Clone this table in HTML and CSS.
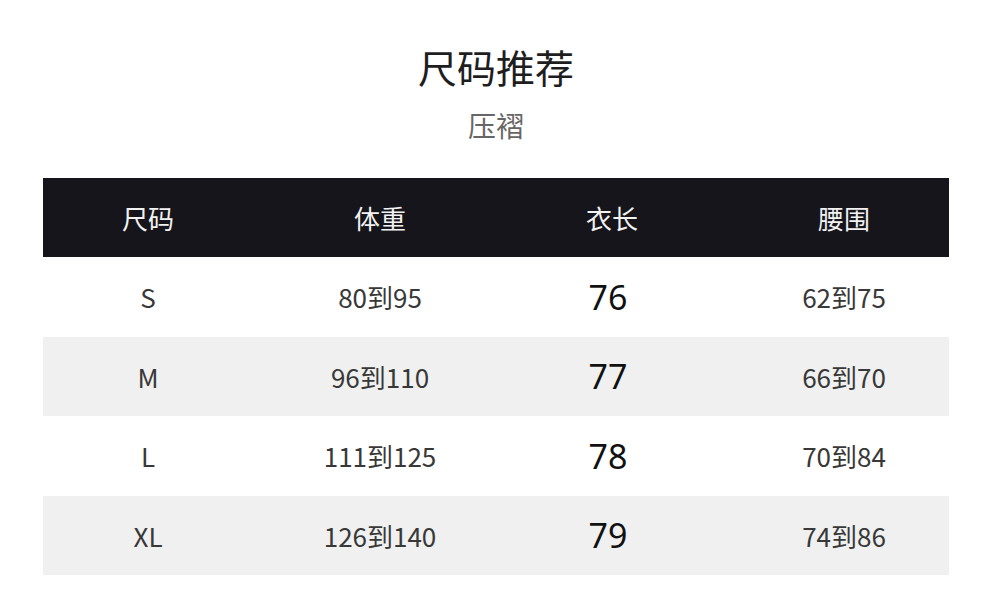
FILE: index.html
```html
<!DOCTYPE html>
<html lang="zh-CN">
<head>
<meta charset="utf-8">
<title>尺码推荐</title>
<link rel="stylesheet" href="styles.css">
</head>
<body>
<main class="page">
  <h1 class="title">尺码推荐</h1>
  <p class="subtitle">压褶</p>
  <section class="table">
    <div class="band head">
      <div class="cells">
        <span>尺码</span><span>体重</span><span>衣长</span><span>腰围</span>
      </div>
    </div>
    <div class="band">
      <div class="cells">
        <span>S</span><span>80到95</span><span class="len">76</span><span>62到75</span>
      </div>
    </div>
    <div class="band alt">
      <div class="cells">
        <span>M</span><span>96到110</span><span class="len">77</span><span>66到70</span>
      </div>
    </div>
    <div class="band">
      <div class="cells">
        <span>L</span><span>111到125</span><span class="len">78</span><span>70到84</span>
      </div>
    </div>
    <div class="band alt">
      <div class="cells">
        <span>XL</span><span>126到140</span><span class="len">79</span><span>74到86</span>
      </div>
    </div>
  </section>
</main>
</body>
</html>
```
FILE: styles.css
```css
html, body {
  margin: 0;
  padding: 0;
  background: #ffffff;
}

.page {
  width: 990px;
  height: 598px;
  box-sizing: border-box;
  padding: 42px 41px 0 43px;
  font-family: "Noto Sans CJK SC", "Noto Sans", sans-serif;
  overflow: hidden;
}

.title {
  margin: 0;
  text-align: center;
  font-size: 39px;
  line-height: 48px;
  font-weight: 400;
  color: #1e1e1e;
}

.subtitle {
  margin: 18px 0 0;
  text-align: center;
  font-size: 28px;
  line-height: 34px;
  font-weight: 400;
  color: #666666;
}

.table {
  margin-top: 36px;
  display: flex;
  flex-direction: column;
}

.band {
  height: 79.5px;
  background: #ffffff;
}

.band.alt {
  background: #f0f0f0;
}

.band.head {
  height: 79px;
  background: #16151b;
  color: #f2f2f2;
}

.cells {
  margin: 0 -11px;
  height: 100%;
  display: grid;
  grid-template-columns: repeat(4, 1fr);
  align-items: center;
  text-align: center;
  font-size: 26px;
  color: #383838;
}

.head .cells {
  font-size: 26px;
  color: #f2f2f2;
}

.cells .len {
  padding-right: 8px;
  font-family: "Noto Sans", "Noto Sans CJK SC", sans-serif;
  font-size: 34px;
  color: #111111;
}
```
